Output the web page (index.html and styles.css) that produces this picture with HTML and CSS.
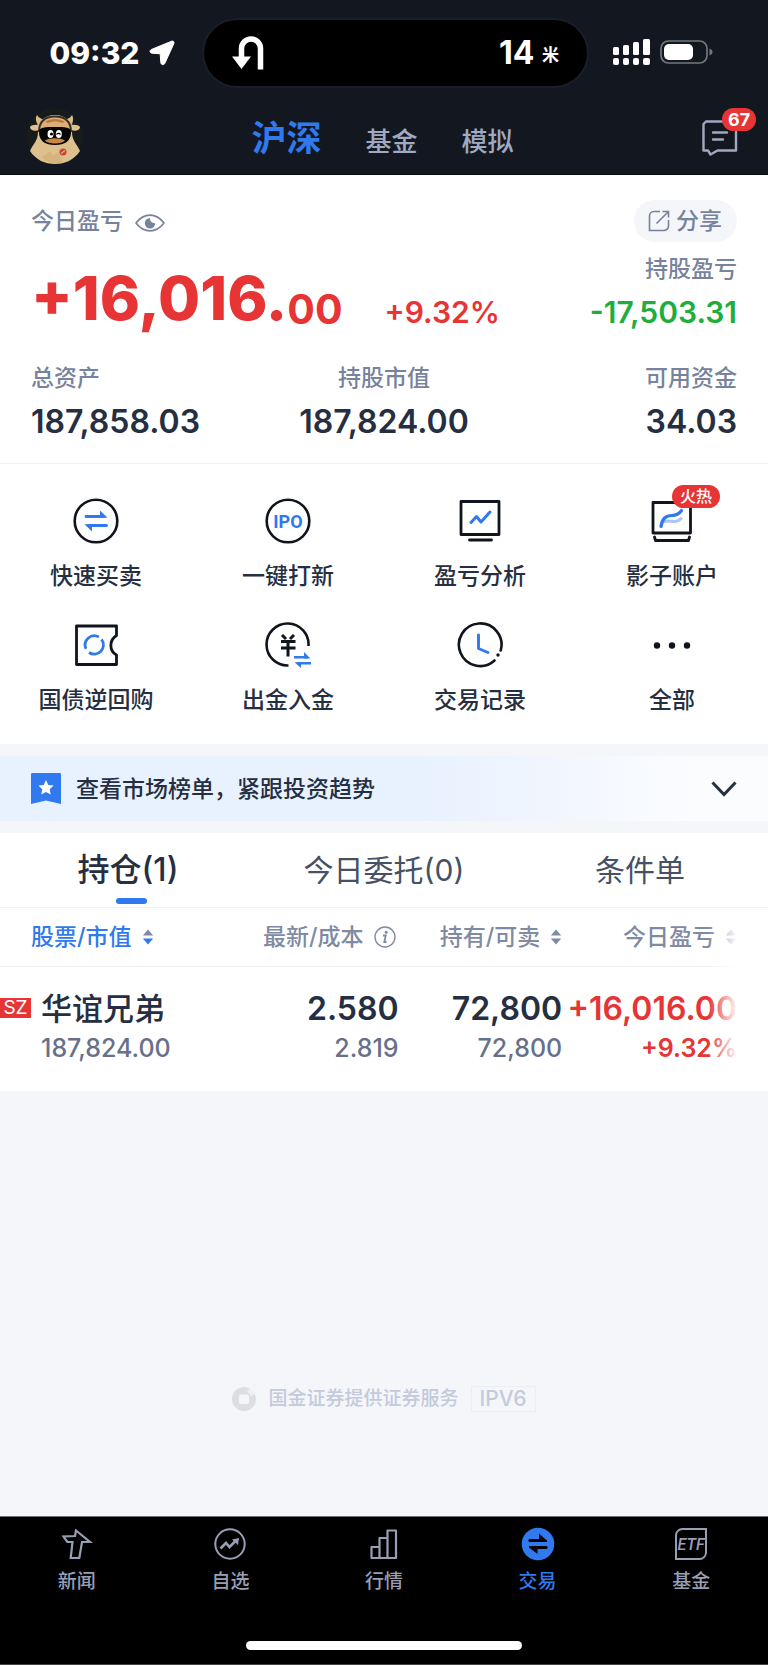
FILE: index.html
```html
<!DOCTYPE html>
<html lang="zh-CN">
<head>
<meta charset="utf-8">
<meta name="viewport" content="width=device-width, initial-scale=1">
<title>交易</title>
<link rel="stylesheet" href="styles.css">
</head>
<body>
<svg class="sprite" aria-hidden="true">
  <symbol id="sort" viewBox="0 0 12 16"><path class="up" d="M6 0.5 11.2 6.5H.8z"/><path class="down" d="M6 15.5 11.2 9.5H.8z"/></symbol>
  <symbol id="sort-active" viewBox="0 0 12 16"><path d="M6 0.5 11.2 6.5H.8z" fill="#7f8aa3"/><path d="M6 15.5 11.2 9.5H.8z" fill="#3079ee"/></symbol>
</svg>
<div class="app">
  <header class="top">
    <div class="status">
      <div class="status-left">
        <span class="clock">09:32</span>
        <svg width="26" height="26" viewBox="0 0 26 26"><path d="M22.6 1.2 2.6 9.4C.2 10.4.7 13 3 13.2l8.2.6.6 8.6c.2 2.8 3.3 3 4.2.6L24.9 3.500c.6-1.600-.7-2.900-2.300-2.300z" fill="#fff" stroke="#fff"/></svg>
      </div>
      <div class="island">
        <svg width="32" height="34" viewBox="0 0 32 34"><path d="M28.500 33.500V12.500a9.500 9.500 0 0 0-19 0V22" fill="none" stroke="#fff" stroke-width="5.500"/><path d="M0 20.500H19L9.500 33z" fill="#fff"/></svg>
        <span class="distance">14 <small>米</small></span>
      </div>
      <div class="status-right">
        <svg width="37" height="27" viewBox="0 0 37 27" fill="#fff"><rect x="0" y="8" width="6" height="8" rx="1.500"/><rect x="10" y="6" width="6" height="10" rx="1.500"/><rect x="20" y="3" width="6" height="13" rx="1.500"/><rect x="30" y="0" width="7" height="16" rx="1.500"/><rect x="0" y="19" width="6" height="7" rx="2"/><rect x="10" y="19" width="6" height="7" rx="2"/><rect x="20" y="19" width="6" height="7" rx="2"/><rect x="30" y="19" width="7" height="7" rx="2"/></svg>
        <svg width="53" height="24" viewBox="0 0 53 24"><rect x="1" y="1" width="46" height="22" rx="7.500" fill="none" stroke="#73767c" stroke-width="1.700"/><rect x="4" y="4" width="29" height="16" rx="5" fill="#fff"/><path d="M49.500 8.500c4 1.500 4 5.500 0 7z" fill="#73767c"/></svg>
      </div>
    </div>
    <div class="nav">
      <button class="avatar" aria-label="我的">
        <svg width="56" height="58" viewBox="0 0 56 58"><circle cx="28" cy="29" r="28" fill="#171b1b"/><path d="M11 18C9 15 8 11 10 8c2 4 8 5 12 5h12c4 0 9-1 11-5 2 3 1 8-1 11z" fill="#d8bb85"/><path d="M12 18c-4-.5-8 0-9 2 0 3 5 5 9 3zM44 18c4-.5 8 0 9 2 0 3-5 5-9 3z" fill="#dfc18b"/><path d="M28 8c-12 0-17 8-17 17C11 34 6 37 3 44c6 9 15 13 25 13s19-4 25-13c-3-7-8-10-8-19C45 16 40 8 28 8z" fill="#ddc08b"/><path d="M12 25C12 14 18 9.500 28 9.500S44 14 44 25" fill="#dcae79" stroke="#3b3128" stroke-width="2"/><path d="M18 15c5-4 15-4 20 0l-3 1c-5-2-9-2-14 0z" fill="#bd783c"/><path d="M12 25c0-5 6-5 16-5s16 0 16 5c0 9-6 13-16 13S12 34 12 25z" fill="#050505"/><ellipse cx="23.500" cy="27" rx="3" ry="4" fill="#fff"/><ellipse cx="31.800" cy="27" rx="3" ry="4" fill="#fff"/><circle cx="24.500" cy="27" r="1.600" fill="#000"/><path d="M29.500 27.500c1-1.500 3-1.500 4 0" stroke="#000" fill="none" stroke-width="1.300"/><path d="M18 33.500c5-3 15-3 20 0-3 4-17 4-20 0z" fill="#c88645"/><path d="M15 50l8-6 3 5 5-4 5 11c-8 2-15 0-21-6z" fill="#cda970" opacity=".5"/><circle cx="36" cy="45" r="3.600" fill="#d14439"/><path d="M34 46.500l4-3" stroke="#f1d3a5" stroke-width="1"/></svg>
      </button>
      <nav class="markets">
        <a class="market current" href="#" aria-current="page">沪深</a>
        <a class="market" href="#">基金</a>
        <a class="market" href="#">模拟</a>
      </nav>
      <button class="messages" aria-label="消息">
        <svg width="36" height="36" viewBox="0 0 36 36" fill="none" stroke="#a0a9c0" stroke-width="2.400" stroke-linecap="round" stroke-linejoin="round"><path d="M34 12V30.500H15.500L8.500 34.500 6 30.500H1.500V4L4 1.500H25M11 12.500h14M11 19.500h10"/></svg>
        <span class="count">67</span>
      </button>
    </div>
  </header>

  <main class="content">
    <section class="summary">
      <div class="summary-head">
        <span class="label">今日盈亏</span>
        <button class="eye" aria-label="隐藏金额"><svg width="30" height="18" viewBox="0 0 30 18"><path d="M1 9C9-1.500 21-1.500 29 9 21 19.500 9 19.500 1 9z" fill="none" stroke="#77829c" stroke-width="1.600" stroke-linejoin="round"/><path d="M15 4a5.200 5.200 0 1 0 5.200 5.200c-3 .3-5.500-2-5.200-5.200z" fill="#77829c"/></svg></button>
        <button class="share"><svg width="22" height="22" viewBox="0 0 22 22" fill="none" stroke="#77829c" stroke-width="1.600"><path d="M12 1.500H6a4.500 4.500 0 0 0-4.500 4.500V20.500H16a4.500 4.500 0 0 0 4.500-4.500V10M8.500 13.500 20 2M14.500 1.500h6v6"/></svg>分享</button>
      </div>
      <div class="profit">
        <div class="profit-main"><span class="whole">+16,016.</span><span class="cents">00</span><span class="rate">+9.32%</span></div>
        <div class="holding"><span class="label">持股盈亏</span><span class="loss">-17,503.31</span></div>
      </div>
      <dl class="assets">
        <div><dt>总资产</dt><dd>187,858.03</dd></div>
        <div><dt>持股市值</dt><dd>187,824.00</dd></div>
        <div><dt>可用资金</dt><dd>34.03</dd></div>
      </dl>
    </section>

    <section class="actions">
      <a class="action" href="#"><svg width="46" height="46" viewBox="0 0 46 46" fill="none"><circle cx="23" cy="23" r="21.300" stroke="#10141d" stroke-width="2.600"/><path d="M13 18.500H31" stroke="#3079ee" stroke-width="2.800" stroke-linecap="round"/><path d="M27 12.500l7.500 7.300H27z" fill="#3079ee"/><path d="M15 27.500h18.500" stroke="#3079ee" stroke-width="2.800" stroke-linecap="round"/><path d="M11.500 26.200H19v7.300z" fill="#3079ee"/></svg>快速买卖</a>
      <a class="action" href="#"><svg width="46" height="46" viewBox="0 0 46 46"><circle cx="23" cy="23" r="21.300" fill="none" stroke="#10141d" stroke-width="2.600"/><text class="ipo" x="23" y="30" text-anchor="middle">IPO</text></svg>一键打新</a>
      <a class="action" href="#"><svg width="46" height="46" viewBox="0 0 46 46" fill="none" stroke-linecap="round" stroke-linejoin="round"><path d="M4 3.500h38v33H4zM12.500 42h22" stroke="#10141d" stroke-width="2.800"/><path d="M14 24.500l5.500-6 4.500 5.500 9-10" stroke="#3079ee" stroke-width="3"/></svg>盈亏分析</a>
      <a class="action" href="#"><svg width="46" height="46" viewBox="0 0 46 46" fill="none" stroke-linecap="round" stroke-linejoin="round"><path d="M4 4.500h37.500v30.500H4zM5.500 39l1 3.500H39.500L40.500 39" stroke="#10141d" stroke-width="2.800"/><path d="M15 23.500c4-1 5-1 10 0 4 0 5-1 7-3" stroke="#a7c5f7" stroke-width="3"/><path d="M12 28.500C13 20 17 17.500 23 17.500 28 17.500 30 16 32.500 12.500" stroke="#3079ee" stroke-width="3.200"/></svg><span class="hot">火热</span>影子账户</a>
      <a class="action" href="#"><svg width="46" height="46" viewBox="0 0 46 46" fill="none" stroke-linejoin="round"><path d="M3.500 4H43.500V13.500C36 18 36 29 43.500 33v9.500H3.500z" stroke="#10141d" stroke-width="2.800"/><path d="M25.900 15A9.200 9.200 0 0 0 13 26.900M16 30.500A9.200 9.200 0 0 0 28.500 17.300" stroke="#3079ee" stroke-width="2.800"/></svg>国债逆回购</a>
      <a class="action" href="#"><svg width="46" height="46" viewBox="0 0 46 46" fill="none"><path d="M23.500 43.500A21 21 0 1 1 43.500 24" stroke="#10141d" stroke-width="2.600"/><path d="M17 13l4 4M29 13l-4 4M16 19.500h14.500M16 26h14.500M23 19.500V34.500" stroke="#10141d" stroke-width="3"/><path d="M29 35.300H43M32 41.300H46" stroke="#3079ee" stroke-width="2.400"/><path d="M39 30l6.500 6.400H39zM29.500 40.200H36V46z" fill="#3079ee"/></svg>出金入金</a>
      <a class="action" href="#"><svg width="46" height="46" viewBox="0 0 46 46" fill="none" stroke-linecap="round" stroke-linejoin="round"><path d="M37.500 38.500A21.300 21.300 0 1 1 43.700 28.500" stroke="#10141d" stroke-width="2.600"/><circle cx="41" cy="33" r="1.700" fill="#10141d"/><path d="M21.500 13V26.500l9.500 4" stroke="#3079ee" stroke-width="2.900"/></svg>交易记录</a>
      <a class="action" href="#"><svg width="46" height="46" viewBox="0 0 46 46" fill="#10141d"><circle cx="8" cy="23.500" r="3.200"/><circle cx="23" cy="23.500" r="3.200"/><circle cx="38" cy="23.500" r="3.200"/></svg>全部</a>
    </section>

    <button class="banner">
      <svg width="30" height="31" viewBox="0 0 30 31"><path d="M0 1.500C0 .5.500 0 1.500 0h27c1 0 1.500.5 1.500 1.500V31L15 27.500 0 31z" fill="#3079ee"/><path d="M15 7l2.300 4.900 5.300.7-3.900 3.700 1 5.300L15 19l-4.700 2.600 1-5.300-3.900-3.700 5.300-.7z" fill="#fff"/></svg>
      <span>查看市场榜单，紧跟投资趋势</span>
      <svg class="chevron" width="26" height="16" viewBox="0 0 26 16"><path d="M1.500 1.500 13 13.500 24.500 1.500" fill="none" stroke="#262f42" stroke-width="3"/></svg>
    </button>

    <section class="positions">
      <div class="tabs" role="tablist">
        <button class="tab selected" role="tab" aria-selected="true">持仓(1)</button>
        <button class="tab" role="tab" aria-selected="false">今日委托(0)</button>
        <button class="tab" role="tab" aria-selected="false">条件单</button>
      </div>
      <div class="table-wrap">
        <table class="stocks">
          <thead>
            <tr>
              <th class="sorted"><div class="head">股票/市值<svg class="sort" width="12" height="16"><use href="#sort-active"/></svg></div></th>
              <th class="cost"><div class="head">最新/成本<svg width="22" height="22" viewBox="0 0 22 22"><circle cx="11" cy="11" r="10" fill="none" stroke="#7f8aa3" stroke-width="1.400"/><circle cx="12.200" cy="6.300" r="1.500" fill="#7f8aa3"/><path d="M9 9.500h2.800L10.300 16h2.200" fill="none" stroke="#7f8aa3" stroke-width="1.800"/></svg></div></th>
              <th><div class="head">持有/可卖<svg class="sort" width="12" height="16"><use href="#sort"/></svg></div></th>
              <th><div class="head">今日盈亏<svg class="sort" width="12" height="16"><use href="#sort"/></svg></div></th>
            </tr>
          </thead>
          <tbody>
            <tr>
              <td><div class="stock"><span class="exchange">SZ</span><div><div class="primary">华谊兄弟</div><div class="secondary">187,824.00</div></div></div></td>
              <td><div class="primary">2.580</div><div class="secondary">2.819</div></td>
              <td><div class="primary">72,800</div><div class="secondary">72,800</div></td>
              <td class="gain"><div class="primary">+16,016.00</div><div class="secondary">+9.32%</div></td>
            </tr>
          </tbody>
        </table>
      </div>
    </section>

    <p class="provider">
      <svg width="24" height="24" viewBox="0 0 24 24"><circle cx="12" cy="12" r="12" fill="#dcdee2"/><rect x="7" y="7.500" width="10" height="9.500" rx="2" fill="#f4f6fa"/><path d="M15 4.500 18 1l5 5.500-3.500 3z" fill="#eceef2"/><path d="M17 0l7 8" stroke="#f4f6fa"/></svg>
      <span>国金证券提供证券服务</span><span class="ipv6">IPV6</span>
    </p>
  </main>

  <footer class="bottom">
    <nav class="tabbar">
      <a href="#"><svg width="34" height="34" viewBox="0 0 34 34" fill="none" stroke="#989fb5" stroke-width="2.200"><path d="M16 3.500 30 15H22L19.300 31H10.700L12.500 15H7.300L3.500 9.500 15 9z"/></svg>新闻</a>
      <a href="#"><svg width="34" height="34" viewBox="0 0 34 34" fill="none" stroke="#989fb5" stroke-width="2"><circle cx="17" cy="17" r="14.700"/><path d="M7.500 21.500 13 16l3.500 4 6.500-6.500" stroke-width="2.600"/><path d="M19 12.500l7-1.500-1 7z" fill="#989fb5" stroke="none"/></svg>自选</a>
      <a href="#"><svg width="34" height="34" viewBox="0 0 34 34" fill="none" stroke="#989fb5" stroke-width="2.200" stroke-linejoin="round"><path d="M4.500 31V20H12.500V31zM12.500 31V11H20.500V31zM20.500 31V3.500H29V31z"/></svg>行情</a>
      <a class="active" href="#" aria-current="page"><svg width="34" height="34" viewBox="0 0 34 34"><circle cx="17" cy="17" r="16.300" fill="#3079ee"/><path d="M8.500 12h9.500V6.500L26 13.500V15H8.500c-1.500 0-1.500-3 0-3zM25.500 19c1.500 0 1.500 3 0 3H16.500v5L8 20.500V19z" fill="#020409"/></svg>交易</a>
      <a href="#"><svg width="34" height="34" viewBox="0 0 34 34"><path d="M2 32V8.500A6.500 6.500 0 0 1 8.500 2H32V25.500A6.500 6.500 0 0 1 25.500 32z" fill="none" stroke="#989fb5" stroke-width="2"/><text class="etf" x="17" y="23" text-anchor="middle">ETF</text></svg>基金</a>
    </nav>
    <div class="home"></div>
  </footer>
</div>
</body>
</html>
```

FILE: styles.css
```css
* { box-sizing: border-box; }
body {
  margin: 0;
  font-family: Inter, "Noto Sans CJK SC", sans-serif;
  font-size: 23px;
  line-height: 32px;
  font-weight: 500;
  color: #262f42;
  background: #f4f6fa;
}
button {
  margin: 0;
  padding: 0;
  border: 0;
  background: none;
  font: inherit;
  color: inherit;
}
a { color: inherit; text-decoration: none; }
svg { display: block; flex: none; }
.sprite { position: absolute; width: 0; height: 0; }
.app { display: flex; flex-direction: column; min-height: 100vh; }

/* Status bar and market navigation */
.top { background: #131820; border-bottom: 1px solid #06080c; }
.status {
  display: grid;
  grid-template-columns: 1fr 50% 1fr;
  align-items: center;
  padding-top: 20px;
  color: #fff;
}
.status-left { display: flex; align-items: center; justify-content: center; gap: 9px; padding-left: 32px; }
.clock { font-size: 30px; font-weight: 800; }
.island {
  display: flex;
  align-items: center;
  justify-content: space-between;
  height: 66px;
  margin: 0 -11px 0 12px;
  padding: 0 28px;
  border-radius: 33px;
  background: #000;
  box-shadow: 0 0 0 2px #191f29;
}
.distance { padding-top: 2px; font-size: 32px; font-weight: 700; }
.distance small { font-size: 17px; vertical-align: 3px; }
.status-right { display: flex; align-items: center; gap: 10px; padding-left: 37px; }
.status-right svg { margin-bottom: 2px; }
.nav {
  display: grid;
  grid-template-columns: 1fr auto 1fr;
  align-items: center;
  height: 88px;
  padding: 0 30px 0 27px;
}
.avatar { justify-self: start; margin-top: 11px; }
.markets { display: flex; align-items: baseline; gap: 44px; margin-top: 20px; }
.market { font-size: 26px; line-height: 48px; color: #a0a9c0; }
.market.current { font-size: 35px; font-weight: 700; color: #3079ee; }
.messages { position: relative; justify-self: end; margin-top: 15px; }
.count {
  position: absolute;
  left: 20px;
  top: -12px;
  padding: 0 6px;
  border-radius: 12px;
  background: #e73434;
  color: #fff;
  font-size: 18px;
  font-weight: 700;
  line-height: 23px;
}

/* Account summary */
.summary { padding: 25px 31px 22px; background: #fff; border-bottom: 1px solid #f0f2f5; }
.label, .assets dt { color: #77829c; }
.summary-head { display: flex; align-items: center; }
.eye { margin: 4px 0 0 12px; }
.share {
  display: flex;
  align-items: center;
  gap: 6px;
  height: 42px;
  margin-left: auto;
  padding: 0 15px 0 14px;
  border-radius: 21px;
  background: #f4f6fa;
  color: #77829c;
}
.profit { display: flex; justify-content: space-between; }
.profit-main { display: flex; align-items: flex-end; color: #e73434; font-weight: 700; }
.whole { font-size: 61px; line-height: 64px; font-weight: 800; }
.cents { font-size: 41px; line-height: 42px; }
.rate { margin-left: 42px; font-size: 30px; line-height: 36px; font-weight: 600; }
.holding { display: flex; flex-direction: column; gap: 9px; padding-top: 11px; text-align: right; }
.loss { font-size: 30px; line-height: 36px; font-weight: 600; color: #1fad3c; }
.assets { display: grid; grid-template-columns: 1fr 1fr 1fr; margin: 32px 0 0; }
.assets dd { margin: 9px 0 0; font-size: 32px; line-height: 38px; font-weight: 600; }
.assets div:nth-child(2) { text-align: center; }
.assets div:nth-child(3) { text-align: right; }

/* Shortcut grid */
.actions {
  display: grid;
  grid-template-columns: repeat(4, 1fr);
  row-gap: 30px;
  padding: 34px 0 28px;
  background: #fff;
}
.action { position: relative; display: flex; flex-direction: column; align-items: center; gap: 16px; }
.ipo { font: 700 18px Roboto, sans-serif; fill: #3079ee; }
.hot {
  position: absolute;
  left: 50%;
  top: -13px;
  padding: 0 8px;
  border-radius: 12px;
  background: #e73434;
  color: #fff;
  font-size: 16px;
  line-height: 23px;
}

/* Rankings banner */
.banner {
  display: flex;
  align-items: center;
  gap: 15px;
  width: 100%;
  height: 65px;
  margin: 12px 0;
  padding: 0 31px;
  background: linear-gradient(90deg, #e8f1fe 0%, #e8f1fe 55%, #fbfcfe 90%);
}
.chevron { margin-left: auto; }

/* Positions */
.positions { background: #fff; }
.tabs { display: grid; grid-template-columns: repeat(3, 1fr); border-bottom: 1px solid #f0f2f5; }
.tab { position: relative; height: 74px; font-size: 30px; font-weight: 400; color: #465166; }
.tab.selected { font-size: 32px; color: #262f42; font-weight: 500; }
.tab.selected::after {
  content: "";
  position: absolute;
  left: 50%;
  bottom: 3px;
  width: 31px;
  height: 6px;
  margin-left: -12px;
  border-radius: 3px;
  background: #3079ee;
}
.table-wrap { position: relative; }
.table-wrap::after {
  content: "";
  position: absolute;
  top: 0;
  right: 0;
  bottom: 0;
  width: 60px;
  background: linear-gradient(90deg, rgba(255, 255, 255, 0), #fff 30px);
}
.stocks { width: 100%; table-layout: fixed; border-collapse: collapse; text-align: right; }
.stocks th { width: 21.3%; height: 58px; padding: 0; border-bottom: 1px solid #f0f2f5; font-weight: 500; color: #7f8aa3; }
.stocks th:first-child { width: 30.6%; padding-left: 31px; }
.stocks th.cost { padding-right: 3px; }
.stocks th:last-child { width: 26.8%; }
.stocks th:last-child, .stocks td:last-child { padding-right: 31px; }
.head { display: flex; align-items: center; justify-content: flex-end; gap: 10px; white-space: nowrap; }
.sorted .head { justify-content: flex-start; color: #3079ee; }
.sort { fill: #7f8aa3; }
.stocks td { padding: 21px 0 25px; white-space: nowrap; }
.stock { display: flex; align-items: flex-start; gap: 10px; text-align: left; }
.exchange {
  width: 31px;
  margin-top: 10px;
  background: #e73434;
  color: #fff;
  font-size: 19px;
  font-weight: 400;
  line-height: 20px;
  text-align: center;
}
.primary { font-size: 32px; line-height: 42px; font-weight: 600; }
.stock .primary { font-size: 31px; font-weight: 500; }
.secondary { font-size: 25px; line-height: 36px; color: #66708a; }
.gain .primary, .gain .secondary { color: #e73434; }
.gain .secondary { font-weight: 600; }

/* Service provider note */
.provider {
  display: flex;
  align-items: center;
  justify-content: center;
  gap: 12px;
  margin: 295px 0 40px;
  font-size: 19px;
  line-height: 26px;
  color: #c3cadc;
}
.ipv6 { padding: 0 8px; border: 1px solid #eceef3; font-size: 21px; line-height: 24px; }

/* Bottom navigation */
.bottom { margin-top: auto; padding-bottom: 14px; border-top: 1px solid #6b6c70; border-bottom: 1px solid #444; background: #000; }
.tabbar { display: grid; grid-template-columns: repeat(5, 1fr); padding-top: 10px; color: #989fb5; font-size: 19px; line-height: 26px; }
.tabbar a { display: flex; flex-direction: column; align-items: center; gap: 8px; }
.tabbar .active { color: #3079ee; }
.etf { font: italic 500 16px Roboto, sans-serif; fill: #989fb5; }
.home { width: 36%; height: 9px; margin: 46px auto 0; border-radius: 5px; background: #fff; }
```
